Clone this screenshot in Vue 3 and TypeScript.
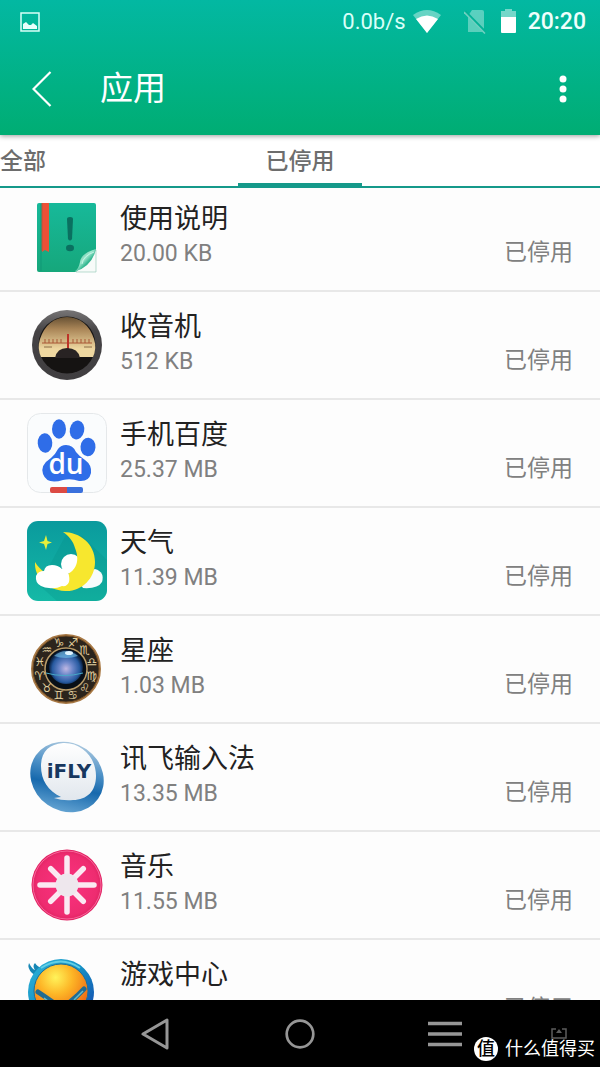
<script setup lang="ts">
import { ref } from 'vue'

interface AppEntry {
  id: string
  name: string
  size: string
}

const tabs = ['全部', '已停用']
const active = ref(1)

const apps: AppEntry[] = [
  { id: 'manual', name: '使用说明', size: '20.00 KB' },
  { id: 'radio', name: '收音机', size: '512 KB' },
  { id: 'baidu', name: '手机百度', size: '25.37 MB' },
  { id: 'weather', name: '天气', size: '11.39 MB' },
  { id: 'zodiac', name: '星座', size: '1.03 MB' },
  { id: 'ifly', name: '讯飞输入法', size: '13.35 MB' },
  { id: 'music', name: '音乐', size: '11.55 MB' },
  { id: 'games', name: '游戏中心', size: '' },
]

// Clockwise around the dial, starting just left of the top
const signs = ['♑', '♐', '♏', '♎', '♍', '♌', '♋', '♊', '♉', '♈', '♓', '♒'].map((glyph, i) => {
  const angle = ((i * 30 - 15) * Math.PI) / 180
  return {
    glyph: glyph + '\uFE0E',
    x: Math.round(39 + 27 * Math.sin(angle)),
    y: Math.round(44 - 27 * Math.cos(angle)),
  }
})

const rays = [0, 45, 90, 135, 180, 225, 270, 315]
const ticks = [18, 22, 26, 30, 34, 46, 50, 54, 58, 62]
</script>

<template>
  <div class="screen">
    <header class="top">
      <div class="status-bar">
        <svg class="shot" width="20" height="20" viewBox="0 0 20 20">
          <rect x="1" y="1" width="18" height="18" fill="none" stroke="#d9fff8" stroke-width="1.5" />
          <path d="M3 17V12L6 10L9 13L11 13L13 11L17 14V17Z" fill="#e9fffb" />
        </svg>
        <span class="speed">0.0b/s</span>
        <svg class="wifi" width="28" height="24" viewBox="0 0 28 24">
          <path d="M0 5Q14 -5 28 5L14 23Z" fill="#fff" opacity=".4" />
          <path d="M3 9Q14 2 25 9L14 23Z" fill="#fff" />
        </svg>
        <svg class="sim" width="22" height="24" viewBox="0 0 22 24">
          <path d="M8 0H18Q20 0 20 2V22H4V6Z" fill="#fff" opacity=".35" />
          <path d="M1 1.500L22 23" stroke="#03b196" stroke-width="3" />
          <path d="M0 2L21 23.500" stroke="#6fd0c0" stroke-width="1.600" />
        </svg>
        <svg class="battery" width="17" height="25" viewBox="0 0 17 25">
          <path d="M5 0H12V2H16V9H1V2H5Z" fill="#fff" opacity=".45" />
          <path d="M1 8H16V23Q16 24 15 24H2Q1 24 1 23Z" fill="#fff" />
        </svg>
        <time class="clock">20:20</time>
      </div>
      <div class="app-bar">
        <button class="icon-button" aria-label="返回">
          <svg width="20" height="36" viewBox="0 0 20 36">
            <path d="M18.500 1L1.500 18L18.500 35" fill="none" stroke="#fff" stroke-width="2.200" />
          </svg>
        </button>
        <h1>应用</h1>
        <button class="icon-button more" aria-label="更多">
          <svg width="8" height="28" viewBox="0 0 8 28">
            <circle cx="4" cy="4" r="3.500" fill="#fff" />
            <circle cx="4" cy="14" r="3.500" fill="#fff" />
            <circle cx="4" cy="24" r="3.500" fill="#fff" />
          </svg>
        </button>
      </div>
    </header>

    <nav class="tabs">
      <button
        v-for="(tab, i) in tabs"
        :key="tab"
        class="tab"
        :class="{ active: i === active }"
        @click="active = i"
      >{{ tab }}</button>
    </nav>

    <main class="content">
      <ul class="list">
        <li v-for="app in apps" :key="app.id" class="row">
          <svg class="app-icon" width="80" height="80" viewBox="0 0 80 80">
            <g v-if="app.id === 'manual'">
              <defs>
                <linearGradient id="cover" x2="0" y2="1">
                  <stop stop-color="#17b99a" /><stop offset="1" stop-color="#16a77b" />
                </linearGradient>
                <linearGradient id="curl" x1="0" y1="0" x2="1" y2="1">
                  <stop stop-color="#15976f" /><stop offset=".45" stop-color="#9fe8cf" /><stop offset=".6" stop-color="#36b892" />
                </linearGradient>
              </defs>
              <path d="M12 6H67Q69 6 69 8V75H12Q10 75 10 73V8Q10 6 12 6Z" fill="url(#cover)" />
              <path d="M14 7V74" stroke="#109776" stroke-width="1" />
              <path d="M15 6H22V55L18 53L15 55Z" fill="#ec5036" />
              <path d="M15 6V54" stroke="#b5553c" stroke-width="1" />
              <path d="M40 22Q40 20 43 20Q46 20 46 22L45 42Q43 45 41 42Z" fill="#0a7060" />
              <ellipse cx="43" cy="51" rx="4" ry="3.200" fill="#0a7060" />
              <path d="M69 53V75H49Z" fill="#f7fbf9" stroke="#9bcdbb" stroke-width=".7" />
              <path d="M69 52Q54 56 53 65Q52 72 47 75Q65 70 69 52Z" fill="url(#curl)" />
              <path d="M67 55Q56 59 55 67" fill="none" stroke="#c4f5e5" stroke-width="1" />
            </g>

            <g v-else-if="app.id === 'radio'">
              <defs>
                <linearGradient id="dial" x2="0" y2="1">
                  <stop stop-color="#675134" /><stop offset=".3" stop-color="#a98557" /><stop offset=".8" stop-color="#eed7a0" />
                </linearGradient>
                <linearGradient id="rim" x2="0" y2="1">
                  <stop stop-color="#777576" /><stop offset=".3" stop-color="#454345" /><stop offset="1" stop-color="#403e40" />
                </linearGradient>
              </defs>
              <circle cx="40" cy="40" r="35" fill="url(#rim)" />
              <circle cx="40" cy="40" r="28.500" fill="#151312" />
              <path d="M14 52Q10 43 13 34Q20 13 40 12Q60 13 67 34Q70 43 66 52Z" fill="url(#dial)" />
              <path d="M15 38H65" stroke="#a95735" stroke-width="1" />
              <path v-for="x in ticks" :key="x" :d="`M${x} 38V34`" stroke="#a95735" stroke-width="1" />
              <path d="M17 42H25M57 42H65" stroke="#8d6e49" stroke-width="1" />
              <path d="M41 29V45" stroke="#bd3429" stroke-width="2" />
              <path d="M28 53Q30 43 40 43Q51 43 53 53Z" fill="#282323" />
            </g>

            <g v-else-if="app.id === 'baidu'">
              <rect x=".5" y=".5" width="79" height="79" rx="13" fill="#fafcfd" stroke="#e5e8ea" />
              <g fill="#2f6de8">
                <ellipse cx="18" cy="30" rx="7.300" ry="9.700" transform="rotate(-4 18 30)" />
                <ellipse cx="32" cy="16" rx="7" ry="9.700" />
                <ellipse cx="50" cy="17" rx="7.200" ry="9.500" transform="rotate(12 50 17)" />
                <ellipse cx="61" cy="34" rx="7.500" ry="9.300" transform="rotate(4 61 34)" />
                <path d="M39 32Q46 32 49 39Q52 43 58 47Q65 52 64 60Q62 69 52 68Q44 65 36 67Q20 72 16 61Q13 52 24 45Q28 42 31 36Q34 32 39 32Z" />
              </g>
              <text x="39" y="61" class="du">du</text>
              <path d="M25 74H40V80H25Q23 80 23 78V76Q23 74 25 74Z" fill="#dc4a43" />
              <path d="M40 74H54Q56 74 56 76V78Q56 80 54 80H40Z" fill="#3a70dc" />
            </g>

            <g v-else-if="app.id === 'weather'">
              <defs>
                <linearGradient id="sky" x2="0" y2="1">
                  <stop stop-color="#0a9a9d" /><stop offset="1" stop-color="#15b9a6" />
                </linearGradient>
                <clipPath id="tile"><rect width="80" height="80" rx="11" /></clipPath>
              </defs>
              <rect width="80" height="80" rx="11" fill="url(#sky)" />
              <path d="M55 15L80 39V80H30L12 64L40 12Z" fill="#058a82" opacity=".25" clip-path="url(#tile)" />
              <circle cx="44" cy="43" r="10" fill="#fff" />
              <path d="M56 67Q71 68 75 61Q78 51 68 48L48 55Z" fill="#f7fbfb" />
              <path d="M36 11C53 11 68 23 68 41C68 58 54 71 38 70C20 69 7 56 8 41C13 49 20 55 32 56C48 53 54 42 48 27C46 20 42 15 36 11Z" fill="#f7e72e" />
              <path d="M14 65Q8 62 9 55Q11 50 17 50Q18 44 25 44Q31 44 35 48Q40 45 41 51Q43 57 42 61Q40 66 35 65Q29 68 22 67Q18 67 14 65Z" fill="#fff" />
              <path d="M19 14L20.500 20L25 21.500L20.500 23L19 29L17 23L12 21.500L17 20Z" fill="#e7ef3b" />
            </g>

            <g v-else-if="app.id === 'zodiac'">
              <defs>
                <radialGradient id="orb" cy=".55">
                  <stop stop-color="#c0b8e3" /><stop offset=".4" stop-color="#6b86c9" /><stop offset=".8" stop-color="#275aa0" /><stop offset="1" stop-color="#0b2345" />
                </radialGradient>
              </defs>
              <circle cx="39" cy="40" r="34" fill="#2b241c" stroke="#a87945" stroke-width="2" />
              <circle cx="39" cy="40" r="33" fill="none" stroke="#6f4b25" stroke-width="1" />
              <circle cx="39" cy="40" r="21" fill="#080f17" stroke="#b99b68" stroke-width="1.500" />
              <circle cx="39" cy="38" r="17" fill="url(#orb)" />
              <path d="M27 27Q39 17 51 27Q39 31 27 27Z" fill="#6fb8e2" opacity=".7" />
              <ellipse cx="42" cy="24" rx="4" ry="2" fill="#dff4ff" />
              <path d="M19 44Q37 49 56 44" fill="none" stroke="#48a9c7" stroke-width="1" />
              <text v-for="sign in signs" :key="sign.glyph" :x="sign.x" :y="sign.y" class="sign">{{ sign.glyph }}</text>
            </g>

            <g v-else-if="app.id === 'ifly'">
              <defs>
                <linearGradient id="ring" x1=".2" x2=".65" y2="1">
                  <stop stop-color="#bfd4e4" /><stop offset=".4" stop-color="#4d91c7" /><stop offset=".65" stop-color="#1769ad" /><stop offset="1" stop-color="#66a5d3" />
                </linearGradient>
                <linearGradient id="bubble" x2="0" y2="1">
                  <stop stop-color="#fff" /><stop offset="1" stop-color="#e1e7ed" />
                </linearGradient>
              </defs>
              <ellipse cx="40" cy="40" rx="38" ry="34" transform="rotate(35 40 40)" fill="url(#ring)" />
              <path d="M36 6C54 5 69 20 69 39C69 54 60 63 46 63Q36 64 27 61L34 60C21 54 14 43 14 29C14 15 22 7 36 6Z" fill="url(#bubble)" />
              <text x="42" y="41" class="ifly">iFLY</text>
            </g>

            <g v-else-if="app.id === 'music'">
              <defs>
                <radialGradient id="pink">
                  <stop stop-color="#fb3280" /><stop offset=".85" stop-color="#ee2c70" /><stop offset="1" stop-color="#e02262" />
                </radialGradient>
              </defs>
              <circle cx="40" cy="40" r="35.500" fill="url(#pink)" />
              <circle cx="40" cy="40" r="34" fill="none" stroke="#f7659a" stroke-width="1" />
              <path
                v-for="ray in rays"
                :key="ray"
                :d="ray % 90 === 0 ? 'M40 40V13' : 'M40 40V17'"
                :transform="`rotate(${ray} 40 40)`"
                stroke="#fbe9f2"
                stroke-width="5.500"
                stroke-linecap="round"
              />
              <circle cx="40" cy="40" r="11.500" fill="#eee7ed" />
            </g>

            <g v-else>
              <defs>
                <linearGradient id="suit" x2="1" y2="1">
                  <stop stop-color="#31b6da" /><stop offset=".45" stop-color="#1592c5" /><stop offset="1" stop-color="#143dab" />
                </linearGradient>
                <radialGradient id="face" cx=".4" cy=".25" r=".7">
                  <stop stop-color="#fff35a" /><stop offset=".45" stop-color="#fdb526" /><stop offset="1" stop-color="#ee6a13" />
                </radialGradient>
              </defs>
              <path d="M5 20Q0 15 2 10Q5 16 8 17Q5 13 8 10Q11 15 15 14L12 25Z" fill="#1787b5" />
              <circle cx="34" cy="39" r="33" fill="url(#suit)" />
              <path d="M14 15Q34 2 53 15" fill="none" stroke="#62cfe5" stroke-width="2" />
              <circle cx="34" cy="38" r="27" fill="url(#face)" stroke="#1b6f9b" stroke-width="1" />
              <path d="M11 39L17 43L27 50M57 36L50 43L43 49" fill="none" stroke="#216b91" stroke-width="5" stroke-linecap="round" />
              <path d="M17 45L22 49M56 38L47 47" stroke="#65bdcb" stroke-width="1.500" />
            </g>
          </svg>
          <div class="info">
            <h2>{{ app.name }}</h2>
            <p v-if="app.size">{{ app.size }}</p>
          </div>
          <span class="state">已停用</span>
        </li>
      </ul>
    </main>

    <footer class="nav-bar">
      <button class="key" aria-label="后退">
        <svg width="28" height="32" viewBox="0 0 28 32">
          <path d="M26 2V30L2 16Z" fill="none" stroke="#969696" stroke-width="3" stroke-linejoin="round" />
        </svg>
      </button>
      <button class="key" aria-label="主页">
        <svg width="30" height="30" viewBox="0 0 30 30">
          <circle cx="15" cy="15" r="13.300" fill="none" stroke="#969696" stroke-width="2.700" />
        </svg>
      </button>
      <button class="key" aria-label="菜单">
        <svg width="34" height="26" viewBox="0 0 34 26">
          <path d="M0 2.500H34M0 13H34M0 23.500H34" stroke="#969696" stroke-width="3.500" />
        </svg>
      </button>
      <button class="key small" aria-label="收起">
        <svg width="16" height="12" viewBox="0 0 16 12">
          <path d="M5 1H1V10H15V1H11" fill="none" stroke="#5c5c5c" stroke-width="1.500" />
          <path d="M5 5L8 1L11 5Z" fill="#5c5c5c" />
        </svg>
      </button>
      <div class="watermark">
        <span class="seal">值</span>
        <span>什么值得买</span>
      </div>
    </footer>
  </div>
</template>

<style>
body {
  margin: 0;
}
</style>

<style scoped>
.screen {
  display: flex;
  flex-direction: column;
  height: 100vh;
  overflow: hidden;
  background: #fdfdfd;
  font-family: Roboto, "Noto Sans CJK SC", sans-serif;
}
button {
  border: 0;
  margin: 0;
  padding: 0;
  background: none;
  font: inherit;
  color: inherit;
  cursor: pointer;
}
svg {
  display: block;
  flex: none;
}
.top {
  position: relative;
  z-index: 2;
  flex: none;
  color: #fff;
  background: linear-gradient(#03b8a2, #00ad73);
  box-shadow: 0 1px 5px rgba(0, 0, 0, 0.4);
}
.status-bar {
  display: flex;
  align-items: center;
  height: 43px;
  padding: 0 14px 0 20px;
}
.speed {
  margin-left: auto;
  font-size: 22px;
  line-height: 28px;
  color: #d9fff8;
}
.wifi {
  margin-left: 7px;
}
.sim {
  margin-left: 23px;
}
.battery {
  margin-left: 14px;
}
.clock {
  margin-left: 11px;
  font-size: 23px;
  line-height: 28px;
  font-weight: 500;
  color: #effffc;
}
.app-bar {
  display: flex;
  align-items: center;
  height: 92px;
  padding: 0 24px 0 32px;
}
.icon-button {
  display: flex;
  align-items: center;
  height: 56px;
}
.more {
  margin-left: auto;
  padding: 0 9px;
}
h1 {
  margin: 0 0 0 48px;
  font-size: 33px;
  line-height: 48px;
  font-weight: 400;
}
.tabs {
  position: relative;
  z-index: 1;
  flex: none;
  display: grid;
  grid-template-columns: 1fr 124px 1fr;
  height: 51px;
  border-bottom: 2px solid #15998a;
  background: #fff;
}
.tab {
  height: 53px;
  padding-top: 6px;
  font-size: 23px;
  font-weight: 500;
  line-height: 42px;
  text-align: left;
  color: #6d6d6d;
  border-bottom: 5px solid transparent;
}
.tab.active {
  text-align: center;
  border-bottom-color: #15998a;
}
.content {
  flex: 1;
  min-height: 0;
  overflow: hidden;
  margin-top: -4px;
}
.list {
  margin: 0;
  padding: 0;
  list-style: none;
}
.row {
  box-sizing: border-box;
  display: flex;
  align-items: flex-start;
  height: 108px;
  padding: 0 27px;
  border-bottom: 2px solid #e8e8e8;
}
.app-icon {
  margin-top: 13px;
}
.info {
  flex: 1;
  margin-left: 13px;
  padding-top: 17px;
}
h2 {
  margin: 0;
  font-size: 27px;
  line-height: 36px;
  font-weight: 400;
  color: #222;
}
p {
  margin: 0;
  font-size: 23px;
  line-height: 34px;
  color: #808080;
}
.state {
  margin-top: 52px;
  font-size: 23px;
  line-height: 34px;
  color: #808080;
}
.du {
  font: 600 28px "Open Sans", sans-serif;
  text-anchor: middle;
  fill: #fff;
}
.sign {
  font: 12px "DejaVu Sans", sans-serif;
  text-anchor: middle;
  fill: #e0cf9f;
}
.ifly {
  font: bold 20px "DejaVu Sans", sans-serif;
  text-anchor: middle;
  fill: #17375f;
}
.nav-bar {
  position: relative;
  z-index: 1;
  flex: none;
  display: flex;
  height: 67px;
  padding-left: 82px;
  background: #000;
}
.key {
  flex: 1;
  display: flex;
  align-items: center;
  justify-content: center;
}
.key.small {
  flex: 0 0 82px;
}
.watermark {
  position: absolute;
  right: 5px;
  bottom: 5px;
  display: flex;
  align-items: center;
  gap: 7px;
  font-size: 18px;
  line-height: 26px;
  color: #fff;
}
.seal {
  width: 24px;
  height: 24px;
  border-radius: 50%;
  background: #fff;
  color: #000;
  font-size: 18px;
  line-height: 24px;
  font-weight: 500;
  text-align: center;
}
</style>
